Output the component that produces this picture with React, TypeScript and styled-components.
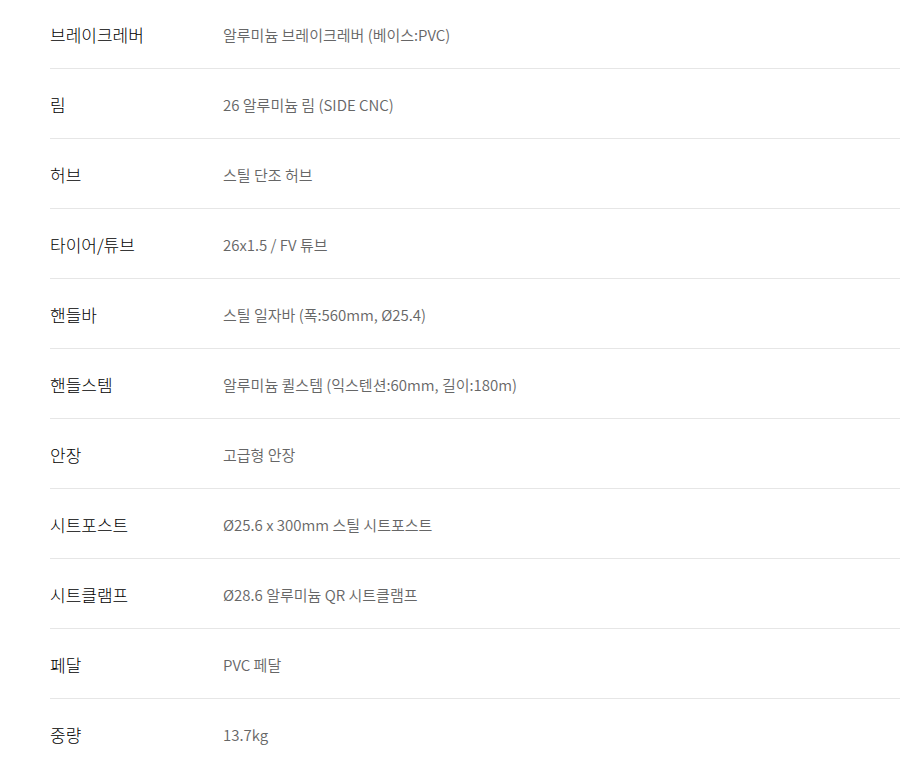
import React from "react";
import styled, { createGlobalStyle } from "styled-components";

const GlobalStyle = createGlobalStyle`
  body {
    margin: 0;
    background: #ffffff;
    font-family: "Noto Sans CJK KR", "Noto Sans", sans-serif;
  }
`;

const SpecTable = styled.div`
  margin-top: -1px;
  padding-left: 50px;
  display: flex;
  flex-direction: column;
`;

const Row = styled.div`
  display: flex;
  align-items: center;
  box-sizing: content-box;
  height: 67px;
  padding-top: 2px;
  border-bottom: 1px solid #e6e6e6;
`;

const Label = styled.div`
  width: 173px;
  flex-shrink: 0;
  font-size: 17px;
  font-weight: 300;
  color: #000000;
`;

const Value = styled.div`
  font-size: 15px;
  font-weight: 350;
  color: #666666;
`;

const specs: [string, string][] = [
  ["브레이크레버", "알루미늄 브레이크레버 (베이스:PVC)"],
  ["림", "26 알루미늄 림 (SIDE CNC)"],
  ["허브", "스틸 단조 허브"],
  ["타이어/튜브", "26x1.5 / FV 튜브"],
  ["핸들바", "스틸 일자바 (폭:560mm, Ø25.4)"],
  ["핸들스템", "알루미늄 퀼스템 (익스텐션:60mm, 길이:180m)"],
  ["안장", "고급형 안장"],
  ["시트포스트", "Ø25.6 x 300mm 스틸 시트포스트"],
  ["시트클램프", "Ø28.6 알루미늄 QR 시트클램프"],
  ["페달", "PVC 페달"],
  ["중량", "13.7kg"],
];

const App = () => {
  return (
    <>
      <GlobalStyle />
      <SpecTable>
        {specs.map(([label, value]) => (
          <Row key={label}>
            <Label>{label}</Label>
            <Value>{value}</Value>
          </Row>
        ))}
      </SpecTable>
    </>
  );
};

export default App;
